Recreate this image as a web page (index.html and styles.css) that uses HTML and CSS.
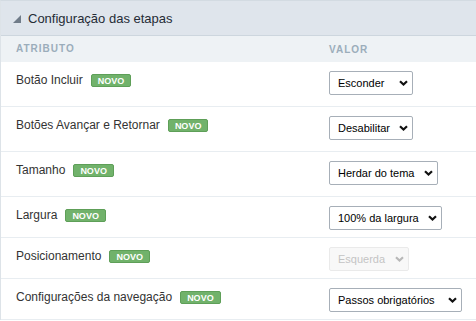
FILE: index.html
```html
<!DOCTYPE html>
<html lang="pt">
<head>
    <meta charset="UTF-8">
    <title>Configuração das etapas</title>
    <link rel="stylesheet" href="styles.css">
</head>
<body>

    <div class="panel">
        <div class="panel-title">
            <span class="toggle"></span>
            Configuração das etapas
        </div>

        <div class="row head">
            <div class="cell-label">ATRIBUTO</div>
            <div class="cell-value">VALOR</div>
        </div>

        <div class="row tall">
            <div class="cell-label">Botão Incluir <span class="badge">NOVO</span></div>
            <div class="cell-value">
                <div class="select-wrap">
                    <select class="w84"><option>Esconder</option></select>
                    <svg class="chevron" width="9" height="6" viewBox="0 0 9 6"><path d="M1 1.2 L4.5 4.5 L8 1.2"/></svg>
                </div>
            </div>
        </div>

        <div class="row tall">
            <div class="cell-label">Botões Avançar e Retornar <span class="badge">NOVO</span></div>
            <div class="cell-value">
                <div class="select-wrap">
                    <select class="w84"><option>Desabilitar</option></select>
                    <svg class="chevron" width="9" height="6" viewBox="0 0 9 6"><path d="M1 1.2 L4.5 4.5 L8 1.2"/></svg>
                </div>
            </div>
        </div>

        <div class="row tall">
            <div class="cell-label">Tamanho <span class="badge">NOVO</span></div>
            <div class="cell-value">
                <div class="select-wrap">
                    <select class="w109"><option>Herdar do tema</option></select>
                    <svg class="chevron" width="9" height="6" viewBox="0 0 9 6"><path d="M1 1.2 L4.5 4.5 L8 1.2"/></svg>
                </div>
            </div>
        </div>

        <div class="row">
            <div class="cell-label">Largura <span class="badge">NOVO</span></div>
            <div class="cell-value">
                <div class="select-wrap">
                    <select class="w113"><option>100% da largura</option></select>
                    <svg class="chevron" width="9" height="6" viewBox="0 0 9 6"><path d="M1 1.2 L4.5 4.5 L8 1.2"/></svg>
                </div>
            </div>
        </div>

        <div class="row">
            <div class="cell-label">Posicionamento <span class="badge">NOVO</span></div>
            <div class="cell-value">
                <div class="select-wrap disabled">
                    <select class="w80" disabled><option>Esquerda</option></select>
                    <svg class="chevron" width="9" height="6" viewBox="0 0 9 6"><path d="M1 1.2 L4.5 4.5 L8 1.2"/></svg>
                </div>
            </div>
        </div>

        <div class="row">
            <div class="cell-label">Configurações da navegação <span class="badge">NOVO</span></div>
            <div class="cell-value">
                <div class="select-wrap">
                    <select class="w133"><option>Passos obrigatórios</option></select>
                    <svg class="chevron" width="9" height="6" viewBox="0 0 9 6"><path d="M1 1.2 L4.5 4.5 L8 1.2"/></svg>
                </div>
            </div>
        </div>
    </div>

</body>
</html>
```

FILE: styles.css
```css
body {
    margin: 0;
    padding: 0;
    background: #fff;
    font-family: "Liberation Sans", Arial, sans-serif;
    color: #333;
}

.panel {
    border-left: 1px solid #dde3e8;
    border-top: 1px solid #d3dbe2;
}

.panel-title {
    height: 34px;
    background: #dfe5ec;
    border-bottom: 1px solid #cdd6de;
    display: flex;
    align-items: center;
    font-size: 13px;
    color: #252c36;
    padding-left: 12px;
}

/* triangulo do cabecalho */
.toggle {
    width: 0;
    height: 0;
    border-left: 8px solid transparent;
    border-bottom: 8px solid #707c89;
    margin-right: 7px;
    margin-top: 1px;
}

.row {
    display: grid;
    grid-template-columns: 328px 1fr;
    padding: 9px 0 7px;
    border-bottom: 1px solid #e8edf1;
}

.row.tall {
    padding-bottom: 11px;
}

.row.head {
    height: 26px;
    padding: 0;
    background: #eef2f5;
    border-bottom: none;
    align-items: center;
    font-size: 10px;
    font-weight: bold;
    letter-spacing: 1px;
    color: #9badbb;
}

.cell-label {
    padding-left: 15px;
    font-size: 12px;
    line-height: 16px;
    padding-top: 1px;
    display: flex;
    align-items: center;
    align-self: start;
}

.row.head .cell-label {
    padding-top: 0;
    font-size: 10px;
    align-self: center;
}

.badge {
    display: inline-block;
    margin-left: 8px;
    height: 13px;
    line-height: 12px;
    box-sizing: border-box;
    padding: 0 6px;
    background: #71b26b;
    border: 1px solid #5e9f58;
    border-radius: 2px;
    color: #fff;
    font-size: 9px;
    font-weight: bold;
}

.select-wrap {
    position: relative;
    display: inline-block;
}

.select-wrap select {
    -webkit-appearance: none;
    appearance: none;
    box-sizing: border-box;
    height: 24px;
    margin: 0;
    padding: 0 0 0 8px;
    border: 1px solid #a7afb8;
    border-radius: 2px;
    background: #fff;
    font-family: "Liberation Sans", Arial, sans-serif;
    font-size: 11px;
    color: #000;
    display: block;
}

.chevron {
    position: absolute;
    right: 5px;
    top: 9px;
    pointer-events: none;
}

.chevron path {
    fill: none;
    stroke: #111;
    stroke-width: 2.2;
}

.select-wrap.disabled select {
    background: #f6f6f6;
    border-color: #e2e2e2;
    color: #ababab;
}

.select-wrap.disabled .chevron path {
    stroke: #b8b8b8;
}

.w80 { width: 80px; }
.w84 { width: 84px; }
.w109 { width: 109px; }
.w113 { width: 113px; }
.w133 { width: 133px; }
```
